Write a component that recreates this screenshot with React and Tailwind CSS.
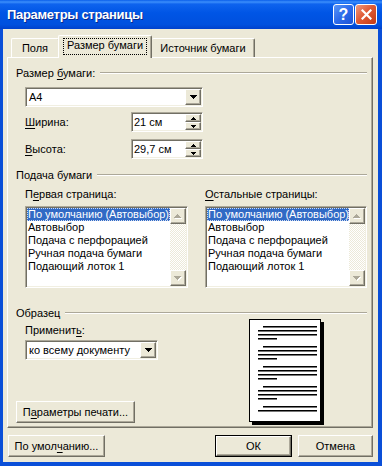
import React from "react";

// classic 3D edges used all over the dialog
const raised =
  "bg-[#ECE9D8] border border-t-white border-l-white border-r-[#716F64] border-b-[#716F64] shadow-[inset_-1px_-1px_0_#ACA899]";
const sunken =
  "border border-t-[#ACA899] border-l-[#ACA899] border-r-white border-b-white shadow-[inset_1px_1px_0_#716F64,inset_-1px_-1px_0_#F1EFE2]";

const U = ({ children }) => (
  <span className="underline underline-offset-[2px] decoration-1">{children}</span>
);

// pixel triangle drawn row by row
function Tri({ dir = "down", size = 4, color = "#000", shadow }) {
  const w = size * 2 - 1;
  const rows = Array.from({ length: size }, (_, i) => i);
  const off = shadow ? 1 : 0;
  const draw = (fill, d) =>
    rows.map((i) => {
      const y = dir === "down" ? i : size - 1 - i;
      return <rect key={fill + i} x={i + d} y={y + d} width={w - i * 2} height={1} fill={fill} />;
    });
  return (
    <svg width={w + off} height={size + off} shapeRendering="crispEdges">
      {shadow && draw(shadow, 1)}
      {draw(color, 0)}
    </svg>
  );
}

function GroupTitle({ children, className = "" }) {
  return (
    <div className={`flex items-center gap-[5px] ${className}`}>
      <span className="whitespace-nowrap">{children}</span>
      <div className="flex-1 border-t border-t-[#ACA899] border-b border-b-white" />
    </div>
  );
}

function Combo({ value, className }) {
  return (
    <div className={`flex h-[20px] bg-white p-[1px] ${sunken} ${className}`}>
      <div className="flex-1 pl-[2px] leading-[16px] whitespace-nowrap overflow-hidden">{value}</div>
      <div className={`w-[16px] flex items-center justify-center ${raised}`}>
        <Tri size={4} />
      </div>
    </div>
  );
}

function Spin({ value }) {
  return (
    <div className={`flex h-[20px] w-[72px] bg-white p-[1px] ${sunken}`}>
      <div className="flex-1 pl-[1px] leading-[16px]">{value}</div>
      <div className="w-[16px] flex flex-col">
        <div className={`flex-1 flex items-center justify-center ${raised}`}>
          <Tri dir="up" size={3} />
        </div>
        <div className={`flex-1 flex items-center justify-center ${raised}`}>
          <Tri size={3} />
        </div>
      </div>
    </div>
  );
}

const items = [
  "По умолчанию (Автовыбор)",
  "Автовыбор",
  "Подача с перфорацией",
  "Ручная подача бумаги",
  "Подающий лоток 1",
];

function ListBox({ className }) {
  return (
    <div className={`flex h-[82px] bg-white p-[1px] ${sunken} ${className}`}>
      <div className="flex-1 overflow-hidden">
        {items.map((t, i) => (
          <div
            key={t}
            className={
              i === 0
                ? "h-[13px] leading-[13px] pl-[1px] whitespace-nowrap bg-[#316AC5] text-white outline-1 outline-dotted outline-offset-[-1px] outline-[#CEDBF3]"
                : "h-[13px] leading-[13px] pl-[1px] whitespace-nowrap"
            }
          >
            {t}
          </div>
        ))}
      </div>
      <div className="w-[16px] flex flex-col">
        <div className={`h-[16px] flex items-center justify-center ${raised}`}>
          <Tri dir="up" size={4} color="#ACA899" shadow="#FFFFFF" />
        </div>
        <div className="flex-1 bg-[repeating-conic-gradient(#ECE9D8_0%_25%,#FFFFFF_0%_50%)] bg-[length:2px_2px]" />
        <div className={`h-[16px] flex items-center justify-center ${raised}`}>
          <Tri size={4} color="#ACA899" shadow="#FFFFFF" />
        </div>
      </div>
    </div>
  );
}

function Button({ children, className = "", isDefault }) {
  if (isDefault) {
    return (
      <div className={`h-[22px] border border-black ${className}`}>
        <div className={`h-full flex items-center justify-center ${raised}`}>{children}</div>
      </div>
    );
  }
  return (
    <div className={`h-[22px] flex items-center justify-center ${raised} ${className}`}>{children}</div>
  );
}

// the small sample page on the right of "Образец"
function PagePreview() {
  const paras = [7, 27, 47, 67];
  const line = (x, y, w) => (
    <g key={`${x}-${y}`}>
      <rect x={x} y={y} width={w} height="1" fill="#000" />
      <rect x={x} y={y + 1} width={w} height="1" fill="#777" />
    </g>
  );
  return (
    <svg width="75" height="106" shapeRendering="crispEdges">
      <rect x="3" y="3" width="72" height="103" fill="#000" />
      <rect x="0.5" y="0.5" width="71" height="102" fill="#fff" stroke="#000" />
      {paras.map((y) => (
        <g key={y}>
          {line(14, y, 54)}
          {line(9, y + 4, 59)}
          {line(9, y + 8, 59)}
          {line(9, y + 12, 19)}
        </g>
      ))}
      {line(14, 87, 54)}
      {line(9, 91, 59)}
    </svg>
  );
}

export default function App() {
  return (
    <div className="w-[382px] h-[466px] flex flex-col text-[11px] text-black font-['Liberation_Sans',Arial,sans-serif] select-none">
      {/* Title bar */}
      <div className="h-[29px] flex items-center pl-[7px] pr-[5px] bg-[linear-gradient(180deg,#0A5EEA_0%,#3C8FFB_7%,#0E63EE_14%,#0055E5_45%,#0050DE_85%,#0041CC_100%)]">
        <span className="text-white font-bold text-[13px] tracking-[-0.3px] [text-shadow:1px_1px_0_#0A2A8C]">
          Параметры страницы
        </span>
        <div className="ml-auto flex gap-[1px]">
          <div className="w-[21px] h-[21px] rounded-[3px] border border-white bg-[linear-gradient(135deg,#5B96F7_0%,#2C6BEA_50%,#1D52D6_100%)] flex items-center justify-center text-white font-bold text-[16px] leading-none">
            ?
          </div>
          <div className="w-[22px] h-[21px] rounded-[3px] border border-white bg-[linear-gradient(135deg,#EE9A7E_0%,#E05B36_45%,#C23A15_100%)] flex items-center justify-center">
            <svg width="11" height="11" viewBox="0 0 11 11">
              <path d="M1.5 1.5 L9.5 9.5 M9.5 1.5 L1.5 9.5" stroke="#fff" strokeWidth="2.2" strokeLinecap="square" />
            </svg>
          </div>
        </div>
      </div>

      {/* Body */}
      <div className="flex-1 flex flex-col bg-[#ECE9D8] border-l-[3px] border-r-[4px] border-b-[4px] border-[#0A4FD8]">
        {/* Tabs */}
        <div className="flex items-end h-[22px] mt-[6px] pl-[8px]">
          <div className="w-[48px] h-[19px] flex items-center justify-center border-t border-l border-t-white border-l-white border-r border-r-[#716F64] rounded-t-[2px]">
            Поля
          </div>
          <div className="relative z-10 -mb-[1px] w-[94px] h-[23px] -ml-[1px] flex items-start justify-center pt-[3px] bg-[#ECE9D8] border-t border-l border-t-white border-l-white border-r border-r-[#716F64] shadow-[inset_-1px_0_0_#ACA899] rounded-t-[2px]">
            <span className="px-[3px] h-[15px] leading-[13px] outline-1 outline-dotted outline-black">
              Размер бумаги
            </span>
          </div>
          <div className="w-[103px] h-[19px] flex items-center justify-center border-t border-t-white border-r border-r-[#716F64] shadow-[inset_-1px_0_0_#ACA899] rounded-t-[2px]">
            Источник бумаги
          </div>
        </div>

        {/* Panel */}
        <div className={`ml-[4px] w-[366px] h-[371px] flex flex-col pl-[8px] pr-[5px] ${raised}`}>
          <GroupTitle className="mt-[8px] h-[14px]">
            Размер <U>б</U>умаги:
          </GroupTitle>
          <Combo value="A4" className="mt-[7px] ml-[9px] w-[178px]" />
          <div className="mt-[5px] ml-[9px] flex items-center">
            <span className="w-[106px]">
              <U>Ш</U>ирина:
            </span>
            <Spin value="21 см" />
          </div>
          <div className="mt-[7px] ml-[9px] flex items-center">
            <span className="w-[106px]">
              <U>В</U>ысота:
            </span>
            <Spin value="29,7 см" />
          </div>

          <GroupTitle className="mt-[9px] h-[14px]">Подача бумаги</GroupTitle>
          <div className="ml-[9px] flex gap-[17px]">
            <div className="w-[163px] flex flex-col">
              <div className="mt-[5px] h-[14px] leading-[14px]">
                П<U>е</U>рвая страница:
              </div>
              <ListBox className="mt-[5px] w-[163px]" />
            </div>
            <div className="w-[162px] flex flex-col">
              <div className="mt-[5px] h-[14px] leading-[14px]">
                <U>О</U>стальные страницы:
              </div>
              <ListBox className="mt-[5px] w-[162px]" />
            </div>
          </div>

          <GroupTitle className="mt-[19px] h-[12px]">Образец</GroupTitle>
          <div className="flex-1 flex -ml-[8px]">
            <div className="w-[241px] pl-[8px] flex flex-col">
              <div className="ml-[9px] mt-[4px] h-[14px] leading-[14px]">
                Применит<U>ь</U>:
              </div>
              <Combo value="ко всему документу" className="mt-[3px] ml-[9px] w-[133px]" />
              <Button className="mt-auto mb-[4px] w-[119px]">
                П<U>а</U>раметры печати...
              </Button>
            </div>
            <PagePreview />
          </div>
        </div>

        {/* Dialog buttons */}
        <div className="flex mt-[7px] pl-[5px] pr-[5px]">
          <Button className="w-[97px]">
            По умол<U>ч</U>анию...
          </Button>
          <Button isDefault className="ml-auto w-[77px]">
            ОК
          </Button>
          <Button className="ml-[6px] w-[75px]">Отмена</Button>
        </div>
      </div>
    </div>
  );
}
